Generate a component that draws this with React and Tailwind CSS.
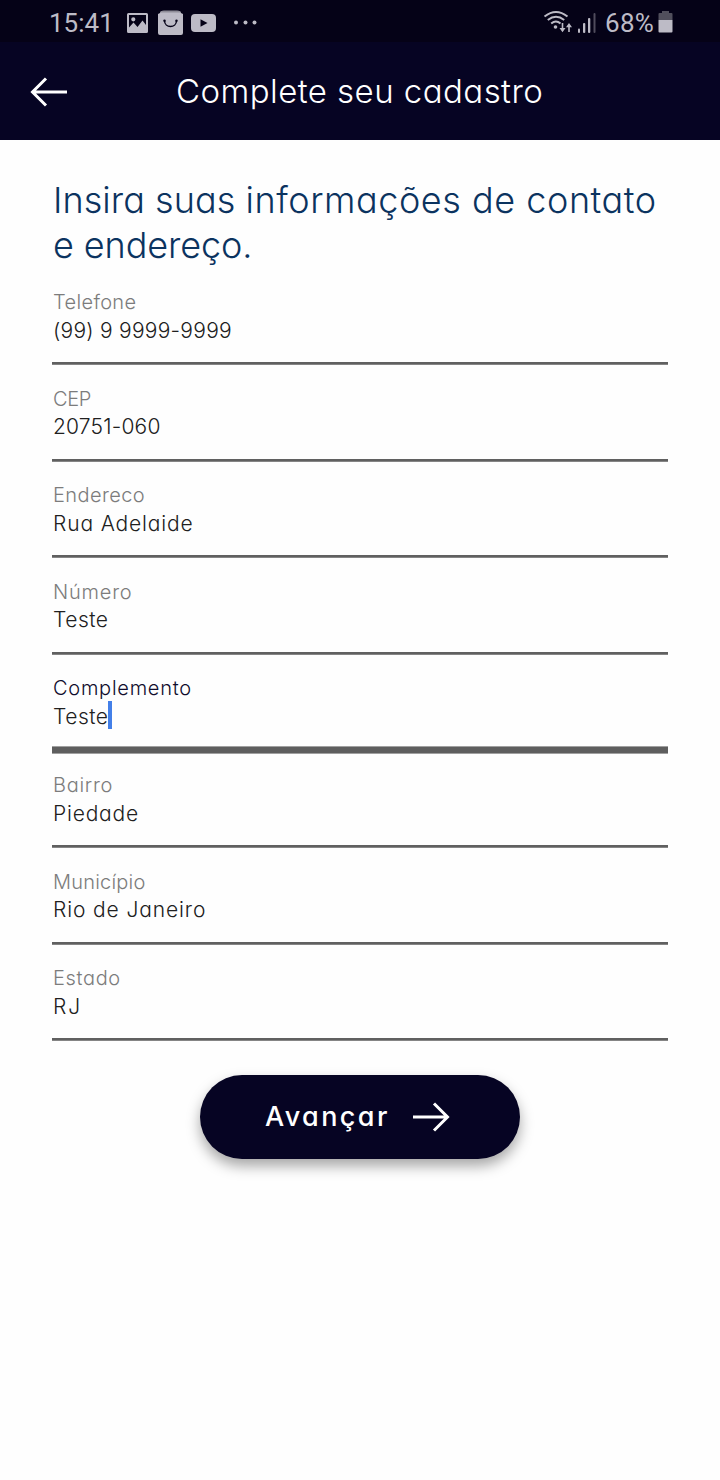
const fields = [
  { label: "Telefone", value: "(99) 9 9999-9999", row: "h-[97px]", lh: "h-[29px]", gap: "mt-[17px]", lt: "tracking-[0.35px]", vt: "tracking-[0.25px]" },
  { label: "CEP", value: "20751-060", row: "h-[96px]", lh: "h-[28px]", gap: "mt-[18px]", lt: "tracking-[-0.4px]", vt: "tracking-[0.2px]" },
  { label: "Endereco", value: "Rua Adelaide", row: "h-[97px]", lh: "h-[29px]", gap: "mt-[17px]", lt: "tracking-[0.4px]", vt: "tracking-[0.85px]" },
  { label: "Número", value: "Teste", row: "h-[96px]", lh: "h-[28px]", gap: "mt-[18px]", lt: "tracking-[0.8px]", vt: "tracking-[0.5px]" },
  { label: "Complemento", value: "Teste", row: "h-[97px]", lh: "h-[29px]", gap: "mt-[15px]", focused: true, lt: "tracking-[0.75px]", vt: "tracking-[0.5px]" },
  { label: "Bairro", value: "Piedade", row: "h-[97px]", lh: "h-[29px]", gap: "mt-[17px]", lt: "tracking-[0.7px]", vt: "tracking-[0.8px]" },
  { label: "Município", value: "Rio de Janeiro", row: "h-[96px]", lh: "h-[28px]", gap: "mt-[18px]", lt: "tracking-[0.2px]", vt: "tracking-[0.88px]" },
  { label: "Estado", value: "RJ", row: "h-[97px]", lh: "h-[29px]", gap: "mt-[17px]", lt: "tracking-[0.65px]", vt: "tracking-[2px]" },
];

function StatusBar() {
  return (
    <div className="flex h-[42px] items-center bg-[#050217] pt-[3px] pl-[49px] pr-[47px] font-['Roboto',sans-serif] text-[26px] leading-[42px] font-normal text-[#bdbbc6]">
      <span className="w-[64px] whitespace-nowrap">15:41</span>
      <svg className="ml-[14px] h-[20px] w-[21px]" viewBox="0 0 21 20" fill="currentColor">
        <path fillRule="evenodd" d="M1.5 0h18A1.5 1.5 0 0 1 21 1.5v17a1.5 1.5 0 0 1-1.5 1.5h-18A1.5 1.5 0 0 1 0 18.500V1.500A1.500 1.500 0 0 1 1.500 0ZM2 2v12.500l4.500-5 4 4.500 5-6.500 3.500 4.500V2ZM6.300 4.200a2.100 2.100 0 1 1 0 4.200a2.100 2.100 0 0 1 0-4.200Z" />
      </svg>
      <svg className="ml-[10px] h-[26px] w-[25px]" viewBox="0 0 25 26">
        <path d="M2 3Q2 1 5 1h15q3 0 3 2l2 1v19a2 2 0 0 1-2 2H2a2 2 0 0 1-2-2V4Z" fill="currentColor" />
        <path d="M3 1.500Q4 .5 6 .5h13q2 0 3 1L23 2.500H2Z" fill="#8f8d98" />
        <path d="M6.500 10.500c0 8 12 8 12 0" fill="none" stroke="#050217" strokeWidth="1.400" />
        <circle cx="6.500" cy="10.800" r="1.200" fill="#050217" />
        <circle cx="18.500" cy="10.800" r="1.200" fill="#050217" />
      </svg>
      <svg className="ml-[8px] h-[18px] w-[25px]" viewBox="0 0 25 18">
        <rect width="25" height="18" rx="4" fill="currentColor" />
        <path d="M9.500 5.300v7.400L16.500 9Z" fill="#050217" />
      </svg>
      <svg className="ml-[18px] h-[6px] w-[24px]" viewBox="0 0 24 6" fill="currentColor">
        <circle cx="2" cy="2.500" r="2" />
        <circle cx="11.500" cy="2.500" r="2" />
        <circle cx="20.500" cy="2.500" r="2" />
      </svg>
      <div className="grow" />
      <svg className="-mt-px mr-[2px] h-[24px] w-[30px]" viewBox="0 0 30 24" fill="none" stroke="currentColor" strokeWidth="2">
        <path d="M1.500 6.500Q13 -2.500 24.500 6.500M4.800 10Q13 3.500 21.200 10M8.200 13.500Q13 9.500 17.500 13.500" />
        <circle cx="12.500" cy="17" r="1.800" fill="currentColor" stroke="none" />
        <path d="M19.500 13v7M26 22v-7" strokeWidth="1.600" />
        <path d="M16.500 18h6l-3 4.200ZM23 17.200h6L26 13Z" fill="currentColor" stroke="none" />
      </svg>
      <svg className="ml-[2px] h-[20px] w-[20px]" viewBox="0 0 20 20" fill="currentColor">
        <rect x="1" y="15.500" width="2" height="4.500" rx="1" />
        <rect x="6" y="10" width="2.300" height="10" rx="1" />
        <rect x="11" y="5" width="2.300" height="15" rx="1" />
        <rect x="16.500" y="0" width="2" height="20" rx="1" opacity=".4" />
      </svg>
      <span className="ml-[8px] w-[52px] tracking-[0.3px] whitespace-nowrap">68%</span>
      <svg className="-mt-px ml-[1px] h-[22px] w-[15px]" viewBox="0 0 15 22">
        <path d="M4 0h7v2h2.500q1 0 1 1v6H.5V3q0-1 1-1H4Z" fill="#514f5c" />
        <path d="M.5 9h14v11.500q0 1-1 1h-12q-1 0-1-1Z" fill="currentColor" />
      </svg>
    </div>
  );
}

function Arrow({ className }) {
  return (
    <svg className={className} viewBox="0 0 38 30" fill="none" stroke="white" strokeWidth="3">
      <path d="M2 15h35M16 1.500 2.500 15 16 28.500" />
    </svg>
  );
}

function Field({ field }) {
  return (
    <label className={`flex flex-col ${field.row}`}>
      <span className={`block pt-[2px] text-[20px] leading-[25px] font-[260] whitespace-nowrap ${field.lh} ${field.lt} ${field.focused ? "text-[#100c2c]" : "text-[#7c7c7c]"}`}>
        {field.label}
      </span>
      <span className="flex h-[28px] items-center">
        <span className={`text-[21px] leading-[28px] font-[270] whitespace-nowrap text-[#202020] ${field.vt}`}>{field.value}</span>
        {field.focused && <span className="-mt-[4px] h-[28px] w-[4px] shrink-0 bg-[#437fe8]" />}
      </span>
      <span className={`-ml-px block w-[616px] shrink-0 ${field.gap} ${field.focused ? "h-[8px] border-y border-[#a0a0a0] bg-[#5e5e5e]" : "h-[3px] border-b border-[#858585] bg-[#606060]"}`} />
    </label>
  );
}

export default function App() {
  return (
    <div className="h-[1480px] w-[720px] overflow-hidden bg-[#fefefe] font-['Inter',sans-serif] font-light [font-feature-settings:'cv11']">
      <StatusBar />
      <header className="flex h-[98px] items-center bg-[#060423] pl-[30px] text-white">
        <Arrow className="mt-px h-[30px] w-[38px]" />
        <h1 className="ml-[108px] text-[33px] leading-[40px] font-[270] tracking-[0.45px] whitespace-nowrap">Complete seu cadastro</h1>
      </header>
      <main className="pl-[53px]">
        <h2 className="pt-[38px] text-[36px] leading-[45px] font-[270] tracking-[0.55px] whitespace-nowrap text-[#0b335f]">
          <span className="block"><span className="tracking-[0.05px]">Insira suas </span>informações de contato</span>
          <span className="block tracking-[-0.1px]">e endereço.</span>
        </h2>
        <form className="pt-[20px]">
          {fields.map((f) => (
            <Field key={f.label} field={f} />
          ))}
        </form>
        <button className="mt-[14px] ml-[147px] flex h-[84px] w-[320px] items-center rounded-full bg-[#060423] pl-[65px] text-white shadow-[0_7px_14px_rgba(0,0,0,0.35)]">
          <span className="mt-px w-[124px] text-left text-[27px] font-[450] tracking-[2.4px] whitespace-nowrap">Avançar</span>
          <Arrow className="ml-[23px] h-[30px] w-[38px] rotate-180" />
        </button>
      </main>
    </div>
  );
}
